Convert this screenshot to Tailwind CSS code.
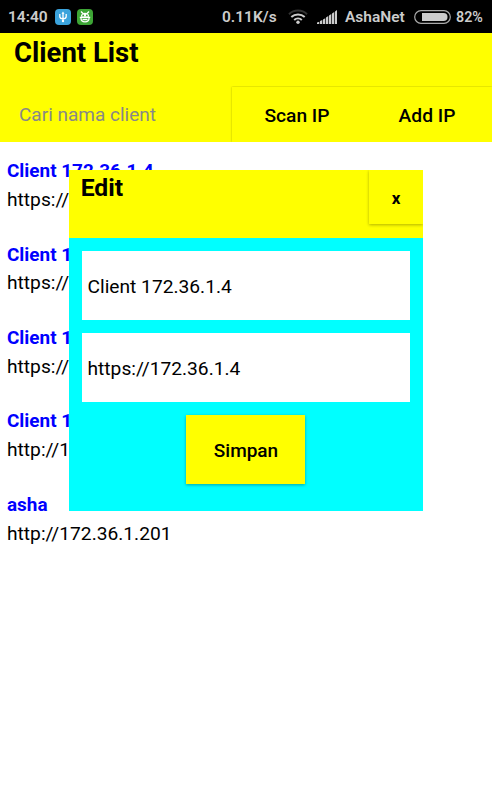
<!DOCTYPE html>
<html lang="id">
<head>
  <meta charset="UTF-8" />
  <meta name="viewport" content="width=device-width, initial-scale=1" />
  <title>Client List</title>
  <script src="https://cdn.jsdelivr.net/npm/@tailwindcss/browser@4"></script>
</head>
<body class="relative h-[800px] overflow-hidden bg-white font-['Roboto',sans-serif] text-[19.2px] text-black">

  <!-- Status bar -->
  <div class="flex h-[32.5px] items-center bg-black pt-[2px] pr-2 pl-2 text-[15.5px] font-semibold text-[#cccccc]">
    <span class="w-[47px] whitespace-nowrap">14:40</span>
    <svg class="-mt-px h-4 w-4" viewBox="0 0 16 16" fill="none">
      <rect width="16" height="16" rx="4" fill="#3ba3dc" />
      <path d="M8 12.5V4M4.8 5v2.500c0 1.500 1.200 2.200 3.200 2.200s3.200-.7 3.200-2.200V5" stroke="#fff" stroke-width="1.3" />
      <path d="M8 2.600l1.500 2.200H6.500z" fill="#fff" />
      <circle cx="8" cy="12" r="1.2" fill="#fff" />
    </svg>
    <svg class="-mt-px ml-[6px] h-4 w-4" viewBox="0 0 16 16" fill="none">
      <rect width="16" height="16" rx="4" fill="#3da535" />
      <path d="M4 2.600l2 2M12 2.600l-2 2" stroke="#fff" stroke-width="1.4" />
      <path d="M3.800 7.800c0-2.500 1.700-4 4.200-4s4.200 1.500 4.200 4z" fill="#fff" />
      <path d="M2.800 8.300h10.400M3.900 8.400c0 2.900 1.500 4.500 4.100 4.500s4.100-1.600 4.100-4.500M5.500 10.500h5" stroke="#fff" stroke-width="1.3" />
      <circle cx="6.2" cy="6.400" r=".9" fill="#3da535" />
      <circle cx="9.8" cy="6.400" r=".9" fill="#3da535" />
    </svg>
    <div class="ml-auto flex items-center">
      <span class="w-[66px] whitespace-nowrap">0.11K/s</span>
      <svg class="-mt-px h-4 w-5" viewBox="0 0 20 16" fill="none" stroke-width="2">
        <path d="M1 5.2C6 .4 14 .4 19 5.2" stroke="#333" />
        <path d="M3.3 8.1c3.8-3.5 9.6-3.5 13.4 0M6.2 11c2.2-2 5.4-2 7.6 0" stroke="#ccc" />
        <circle cx="10" cy="13.2" r="1.7" fill="#ccc" />
      </svg>
      <svg class="-mt-px ml-[9px] h-4 w-5" viewBox="0 0 20 16" fill="#ccc">
        <path d="M0 15v-1.500l2.300-.8V15zM3 15v-3l2.300-1V15zM6 15v-4.600l2.300-1.200V15zM9 15V8.500l2.300-1.400V15zM12 15V6.500l2.300-1.400V15zM15 15V4.500l2.300-1.500V15zM18 15V2.500l2-1.500v14z" />
      </svg>
      <span class="ml-[8px] w-[69px] whitespace-nowrap">AshaNet</span>
      <svg class="-mt-px h-[14px] w-[37px]" viewBox="0 0 37 14" fill="none">
        <rect x=".7" y=".7" width="35.600" height="12.600" rx="6.300" stroke="#aaa" stroke-width="1.200" />
        <path d="M8 3h21.500a4 4 0 0 1 0 8H8z" fill="#ccc" />
      </svg>
      <span class="ml-[5px] w-[28px] text-[14.300px] whitespace-nowrap">82%</span>
    </div>
  </div>

  <!-- Header -->
  <header class="flex h-[109px] flex-col bg-[#ffff00]">
    <h1 class="h-[53px] pl-[14px] text-[27.500px] leading-[40px] font-bold">Client List</h1>
    <div class="flex flex-1 overflow-hidden">
      <input type="text" placeholder="Cari nama client" class="w-[232px] pt-[4px] pl-[19px] text-[19px] outline-none placeholder:text-[#888888]" />
      <div class="mt-px flex flex-1 shadow-[0_0_2px_rgba(0,0,0,0.3)]">
        <button class="w-[130px] pt-[4px] font-medium">Scan IP</button>
        <button class="w-[130px] pt-[4px] font-medium">Add IP</button>
      </div>
    </div>
  </header>

  <!-- Client rows -->
  <ul class="pt-[15.800px] pl-[7px] leading-[28.800px]">
    <li class="h-[83.400px]">
      <p class="text-[18.900px] font-bold text-[#0000ff]">Client 172.36.1.4</p>
      <p>https://172.36.1.4</p>
    </li>
    <li class="h-[83.400px]">
      <p class="text-[18.900px] font-bold text-[#0000ff]">Client 172.36.1.4</p>
      <p>https://172.36.1.4</p>
    </li>
    <li class="h-[83.400px]">
      <p class="text-[18.900px] font-bold text-[#0000ff]">Client 172.36.1.4</p>
      <p>https://172.36.1.4</p>
    </li>
    <li class="h-[83.400px]">
      <p class="text-[18.900px] font-bold text-[#0000ff]">Client 172.36.1.4</p>
      <p>http://172.36.1.4</p>
    </li>
    <li class="h-[83.400px]">
      <p class="text-[18.900px] font-bold text-[#0000ff]">asha</p>
      <p>http://172.36.1.201</p>
    </li>
  </ul>

  <!-- Edit dialog -->
  <div class="absolute top-[170px] left-[68.700px] flex h-[341.200px] w-[354.600px] flex-col bg-[#00ffff]">
    <div class="flex h-[68px] items-start justify-between overflow-hidden bg-[#ffff00] pl-3">
      <h2 class="text-[24.700px] leading-[36px] font-bold">Edit</h2>
      <button class="h-[54px] w-[54.500px] pt-1 text-[17px] font-bold shadow-[0_1px_3px_rgba(0,0,0,0.3)]">x</button>
    </div>
    <div class="flex flex-col items-center gap-[13.500px] px-[13.300px] pt-[13.300px]">
      <input type="text" value="Client 172.36.1.4" class="h-[68.700px] w-full bg-white px-[5.500px] pt-px outline-none" />
      <input type="text" value="https://172.36.1.4" class="h-[68.500px] w-full bg-white px-[5.500px] pt-px outline-none" />
      <button class="h-[68.500px] w-[119px] bg-[#ffff00] pt-[3px] text-[19px] font-medium shadow-[0_1px_3px_rgba(0,0,0,0.35)]">Simpan</button>
    </div>
  </div>

</body>
</html>
